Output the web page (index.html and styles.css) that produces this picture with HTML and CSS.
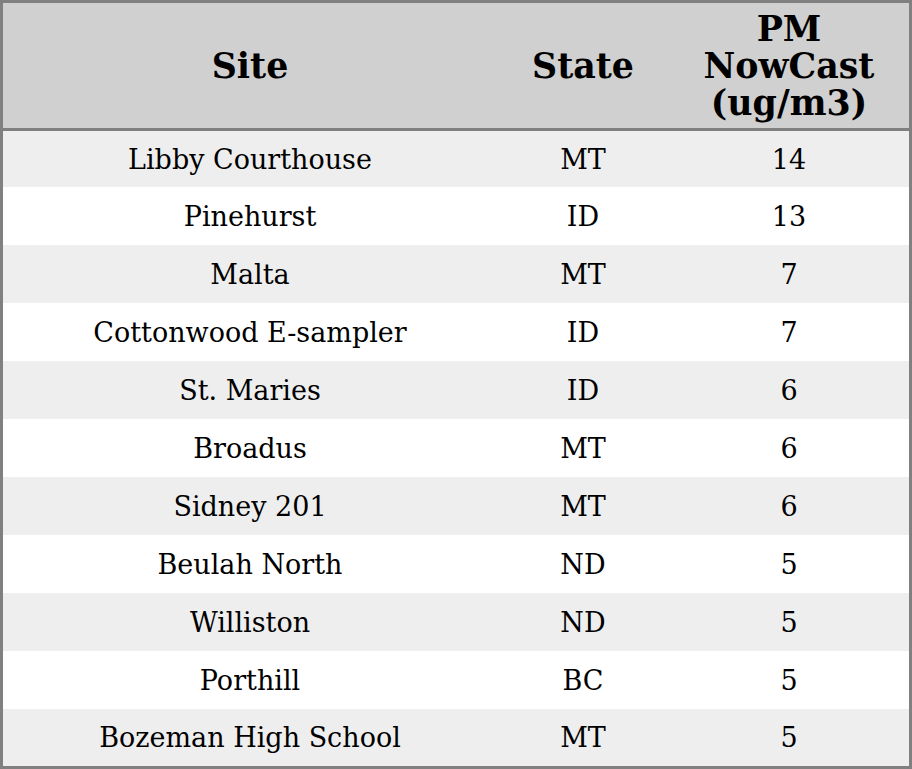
FILE: index.html
```html
<!DOCTYPE html>
<html>
<head>
<meta charset="utf-8">
<link rel="stylesheet" href="styles.css">
</head>
<body>
<table class="aq">
  <colgroup>
    <col class="c-site">
    <col class="c-state">
    <col class="c-pm">
  </colgroup>
  <thead>
    <tr class="head">
      <th>Site</th>
      <th>State</th>
      <th>PM<br>NowCast<br>(ug/m3)</th>
    </tr>
  </thead>
  <tbody>
    <tr><td>Libby Courthouse</td><td>MT</td><td>14</td></tr>
    <tr><td>Pinehurst</td><td>ID</td><td>13</td></tr>
    <tr><td>Malta</td><td>MT</td><td>7</td></tr>
    <tr><td>Cottonwood E-sampler</td><td>ID</td><td>7</td></tr>
    <tr><td>St. Maries</td><td>ID</td><td>6</td></tr>
    <tr><td>Broadus</td><td>MT</td><td>6</td></tr>
    <tr><td>Sidney 201</td><td>MT</td><td>6</td></tr>
    <tr><td>Beulah North</td><td>ND</td><td>5</td></tr>
    <tr><td>Williston</td><td>ND</td><td>5</td></tr>
    <tr><td>Porthill</td><td>BC</td><td>5</td></tr>
    <tr><td>Bozeman High School</td><td>MT</td><td>5</td></tr>
  </tbody>
</table>
</body>
</html>
```
FILE: styles.css
```css
html, body {
  margin: 0;
  padding: 0;
  background: #ffffff;
}
.aq {
  width: 912px;
  height: 769px;
  box-sizing: border-box;
  border: 3px solid #808080;
  border-collapse: separate;
  border-spacing: 0;
  table-layout: fixed;
  font-family: "DejaVu Serif", serif;
  color: #000;
}
.c-site { width: 494px; }
.c-state { width: 172px; }
.c-pm { width: 240px; }
.head th {
  height: 125px;
  padding: 0;
  background: #d0d0d0;
  border-bottom: 3px solid #808080;
  font-size: 34.8px;
  font-weight: bold;
  line-height: 37px;
  text-align: center;
  vertical-align: middle;
}
tbody tr {
  height: 58px;
}
tbody tr:first-child {
  height: 56px;
}
tbody tr:last-child {
  height: 57px;
}
tbody td {
  padding: 0;
  font-size: 27px;
  text-align: center;
  vertical-align: middle;
}
tbody tr:nth-child(odd) td {
  background: #eeeeee;
}
```
